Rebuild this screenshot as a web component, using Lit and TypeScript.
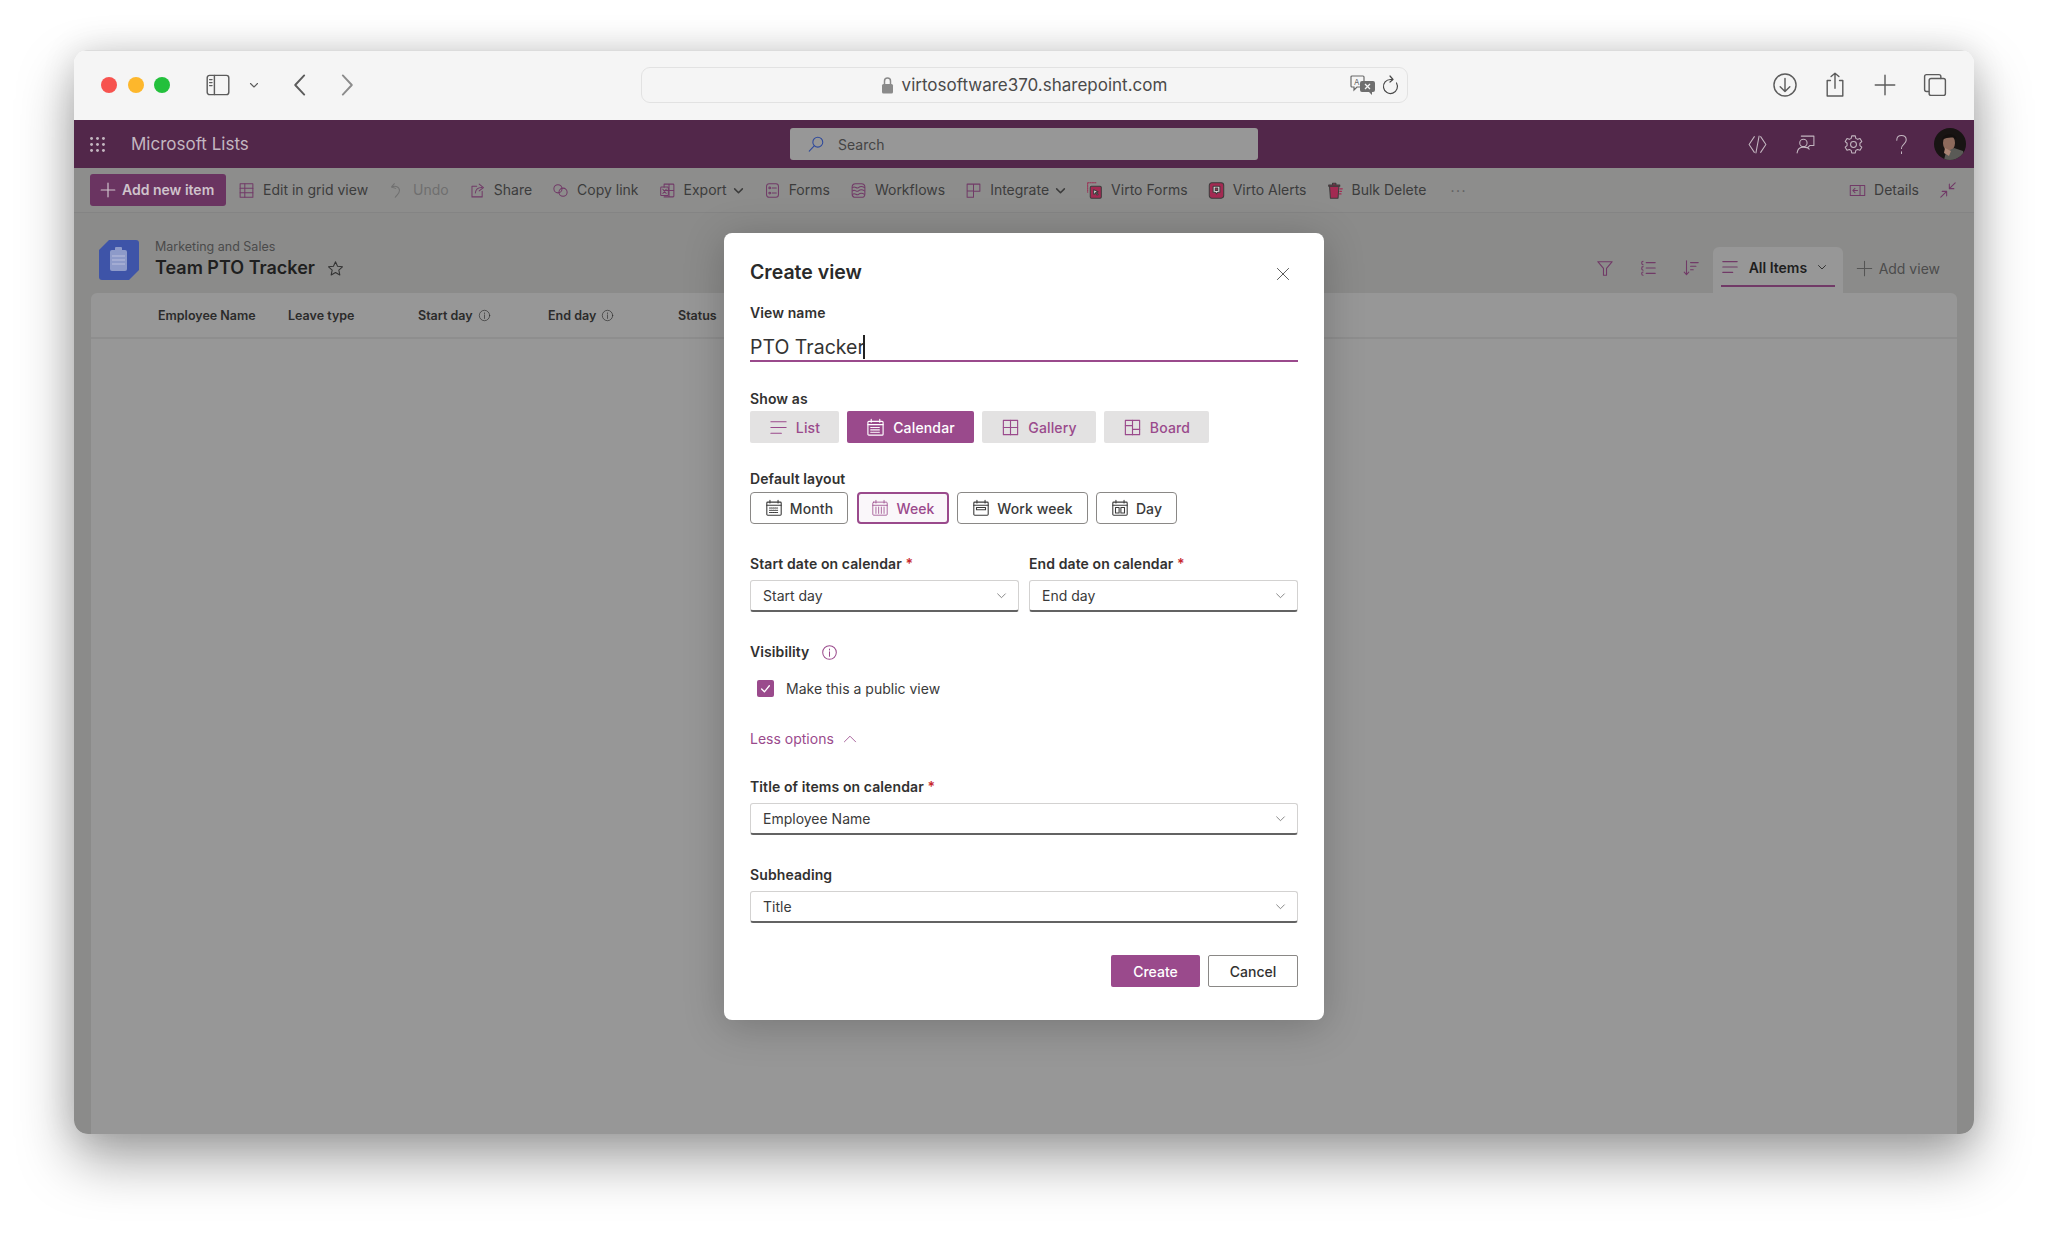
import { LitElement, html, svg, css } from "lit";
import { customElement } from "lit/decorators.js";

// icons, all on a 20x20 box unless noted
const icons: Record<string, any> = {
  grid: svg`<rect x="2.5" y="2" width="15" height="16"/><path d="M2.5 7.3h15M2.5 12.6h15M8 2v16"/>`,
  undo: svg`<path d="M7.5 2 4 6l5 1.5M4.5 6c4-2 9-.5 9 4 0 3.5-3 5-5 8"/>`,
  share: svg`<path d="M9 5H3.5v12.5h12V11"/><path d="M7.5 13c.3-4 3-6.5 7.5-6.5M12 2.5l5 4-5 4"/>`,
  link: svg`<circle cx="7" cy="8" r="4.8"/><circle cx="13" cy="12" r="4.8"/>`,
  excel: svg`<path d="M6 2.5h10.5a1 1 0 0 1 1 1v13a1 1 0 0 1-1 1H6M11.8 2.5v15M6 10h11.5M6 6.2V2.5"/><rect x="2" y="6" width="9" height="10" rx="1"/><path d="m4.5 8.5 4 5m0-5-4 5"/>`,
  forms: svg`<rect x="3" y="2" width="14" height="16" rx="3"/><circle cx="6.7" cy="7" r="1"/><circle cx="6.7" cy="13" r="1"/><path d="M9.5 7h5M9.5 13h5"/>`,
  flows: svg`<rect x="2.5" y="2" width="15" height="16" rx="4"/><path d="M3 6.5c3-2.5 4.5 2 7 0s4-2 7 0M3 10.5c3-2.5 4.5 2 7 0s4-2 7 0M3 14.5c3-2.5 4.5 2 7 0s4-2 7 0"/>`,
  integrate: svg`<path d="M2.5 2.5h15v8.5H10v7H2.5zM2.5 10.5H10V2.5"/>`,
  details: svg`<rect x="1.5" y="4" width="17" height="12"/><path d="M13 4v12M10 10H4.5M7 7.5 4.5 10 7 12.5"/>`,
  shrink: svg`<path d="M18 2l-6.5 6.5M11.5 3.5v5h5M2 18l6.5-6.5M8.5 16.5v-5h-5"/>`,
  filter: svg`<path d="M2 3h16l-6.3 7.5V18H8.3v-7.5z"/>`,
  lines: svg`<path d="M8 4h10M8 10h10M8 16h10M4.5 2.5C3 2.5 3 3.5 3 4.5s0 1.5 1.5 2M4.5 8.5C3 8.5 3 9.5 3 10.5s0 1.5 1.5 2M4.5 14.5c-1.5 0-1.5.5-1.5 1.500s0 2 1.5 2"/>`,
  sort: svg`<path d="M5 2v15M2.5 14.5 5 17.5l2.5-3M9.5 4H18M9.5 8h6M9.5 12h3"/>`,
  list: svg`<path d="M2 4h16M2 10h16M2 16h11"/>`,
  plus: svg`<path d="M10 1.5v17M1.5 10h17"/>`,
  gallery: svg`<rect x="2.5" y="2.5" width="15" height="15"/><path d="M10 2.5v15M2.5 10h15"/>`,
  board: svg`<rect x="2.5" y="2.5" width="15" height="15"/><path d="M10 2.5v15M10 12h7.5M2.5 8H10"/>`,
  calendar: svg`<rect x="2" y="3.5" width="16" height="14.5" rx="1"/><path d="M2 7h16M5.5 1.5v3M14.5 1.5v3"/><path stroke-dasharray="1 1" d="M5 10h10M5 12.5h10M5 15h10"/>`,
  week: svg`<rect x="2" y="3.5" width="16" height="14.5" rx="1"/><path d="M2 7h16M5.5 1.5v3M14.5 1.5v3M5.5 9v7M8.5 9v7M11.5 9v7M14.5 9v7"/>`,
  workweek: svg`<rect x="2" y="3.5" width="16" height="14.5" rx="1"/><path d="M2 7h16M5.5 1.5v3M14.5 1.5v3"/><rect x="5" y="9.5" width="10" height="2.5"/>`,
  day: svg`<rect x="2" y="3.5" width="16" height="14.5" rx="1"/><path d="M2 7h16M5.5 1.5v3M14.5 1.5v3"/><rect x="5" y="9.5" width="4" height="6"/><rect x="11" y="9.5" width="4" height="6"/>`,
  chevron: svg`<path d="m3 7 7 7 7-7"/>`,
  chevronUp: svg`<path d="m2 14 8-8 8 8"/>`,
  close: svg`<path d="m3 3 14 14M17 3 3 17"/>`,
  info: svg`<circle cx="10" cy="10" r="8"/><path d="M10 9v5.5M10 6v1"/>`,
  star: svg`<path d="m10 2 2.4 5.4 5.8.6-4.3 3.9 1.2 5.7L10 14.7l-5.1 2.9 1.2-5.7L1.8 8l5.8-.6z"/>`,
  search: svg`<circle cx="12" cy="8" r="5.5"/><path d="M8 12.2 2.5 18"/>`,
  dev: svg`<path d="M7 2.5 2 10l5 7.5M13 2.5 18 10l-5 7.5M11.5 2l-3 16"/>`,
  chat: svg`<circle cx="8" cy="8.5" r="3.5"/><path d="M2 18c.5-4 3-5.5 6-5.500s5 1 5.500 2M6 2h12v9h-4l-2 2"/>`,
  gear: svg`<circle cx="10" cy="10" r="2.8"/><path d="M8.3 1.8h3.4l.5 2.4 1.7.9 2.3-.8 1.7 2.9-1.800 1.600v2.200l1.800 1.600-1.700 2.900-2.300-.8-1.700.9-.5 2.400H8.300l-.5-2.400-1.700-.9-2.300.8-1.700-2.900 1.800-1.600V8.800L2.100 7.200l1.700-2.900 2.300.8 1.700-.9z"/>`,
  help: svg`<path d="M5.5 6c0-3 2-4.5 4.5-4.5s4.5 1.5 4.5 4.2c0 3.8-4.5 4-4.5 8M10 17v1.500"/>`,
  waffle: svg`<g fill="currentColor" stroke="none">${[3, 10, 17].flatMap((y) =>
    [3, 10, 17].map((x) => svg`<circle cx=${x} cy=${y} r="1.7"/>`)
  )}</g>`,
  sidebar: svg`<rect x="1" y="2" width="18" height="16" rx="2"/><path d="M7 2v16M3 5.5h2M3 8h2M3 10.5h2"/>`,
  back: svg`<path d="M13.5 2 6 10l7.5 8"/>`,
  forward: svg`<path d="m6.5 2 7.5 8-7.5 8"/>`,
  reload: svg`<path d="M15.5 8a7 7 0 1 1-6-3.5h2M9 1l3 3.5L9 7"/>`,
  download: svg`<circle cx="10" cy="10" r="8.5"/><path d="M10 5v10M6.3 11.3 10 15l3.7-3.700"/>`,
  upload: svg`<path d="M6.5 6.5H4v12h12v-12h-2.5M10 12.5V1M7 3.5 10 1l3 2.5"/>`,
  newtab: svg`<path d="M10 2.5v15M2.5 10h15"/>`,
  tabs: svg`<path d="M5 15H3.5A1.5 1.5 0 0 1 2 13.5v-10A1.5 1.5 0 0 1 3.5 2H13a1.5 1.5 0 0 1 1.5 1.5V5"/><rect x="5.5" y="5" width="12.5" height="13" rx="1.5"/>`,
};

function ic(name: string, cls = "") {
  return html`<svg class="ic ${cls}" viewBox="0 0 20 20">${icons[name]}</svg>`;
}

// the three Virto add-ins have filled artwork
const virtoForms = html`<svg class="ic solid" viewBox="0 0 20 20">
  <path d="M2 1h10M2 1v11" fill="none" stroke="#9c2c52" stroke-width="1.2" stroke-dasharray="1.5 1.2"/>
  <rect x="5" y="5" width="13" height="14" rx="1.5" fill="#a32a52"/>
  <path d="M9 9v5h1.5l.7-1.5 2 3 1.2-.8-2-2.800 1.800-.5z" fill="#d9d9d9"/>
</svg>`;
const virtoAlerts = html`<svg class="ic solid" viewBox="0 0 20 20">
  <rect x="1.5" y="1" width="17" height="18" rx="3" fill="#a32a52"/>
  <path d="M6 5h8v7h-2.5L10 14l-1.5-2H6z" fill="#dcdcdc"/>
  <rect x="8.5" y="7" width="3" height="3" fill="#a32a52"/>
</svg>`;
const bulkDelete = html`<svg class="ic solid" viewBox="0 0 20 20">
  <path d="M3 5h11l-1 14H4z" fill="#a32a52"/>
  <path d="M2 3.5h13V5H2zM6.5 1.5h4v2h-4z" fill="#a32a52"/>
  <path d="M15 8h3M15 11h2M14.5 14h2" stroke="#a32a52" stroke-width="1.4"/>
</svg>`;

const commands = [
  { label: "Edit in grid view", icon: ic("grid", "cmd-ic") },
  { label: "Undo", icon: ic("undo", "cmd-ic"), off: true },
  { label: "Share", icon: ic("share", "cmd-ic") },
  { label: "Copy link", icon: ic("link", "cmd-ic") },
  { label: "Export", icon: ic("excel", "cmd-ic"), menu: true },
  { label: "Forms", icon: ic("forms", "cmd-ic") },
  { label: "Workflows", icon: ic("flows", "cmd-ic") },
  { label: "Integrate", icon: ic("integrate", "cmd-ic"), menu: true },
  { label: "Virto Forms", icon: virtoForms },
  { label: "Virto Alerts", icon: virtoAlerts },
  { label: "Bulk Delete", icon: bulkDelete },
];

const columns = [
  { label: "Employee Name" },
  { label: "Leave type" },
  { label: "Start day", info: true },
  { label: "End day", info: true },
  { label: "Status" },
];

const showAs = [
  { label: "List", icon: "list", cls: "w-list" },
  { label: "Calendar", icon: "calendar", cls: "w-cal on" },
  { label: "Gallery", icon: "gallery", cls: "w-gal" },
  { label: "Board", icon: "board", cls: "w-board" },
];

const layouts = [
  { label: "Month", icon: "calendar", cls: "w-month" },
  { label: "Week", icon: "week", cls: "w-week on" },
  { label: "Work week", icon: "workweek", cls: "w-work" },
  { label: "Day", icon: "day", cls: "w-day" },
];

@customElement("app-root")
export class AppRoot extends LitElement {
  static styles = css`
    :host {
      display: block;
      width: 2048px;
      height: 1233px;
      background: #fff;
      font-family: Inter, "Noto Sans", "Liberation Sans", sans-serif;
      color: #323130;
    }
    .page {
      box-sizing: border-box;
      height: 1233px;
      padding: 50px 74px 0;
    }
    .window {
      position: relative;
      height: 1084px;
      display: flex;
      flex-direction: column;
      border-radius: 14px;
      overflow: hidden;
    }
    .shadow {
      border-radius: 14px;
      box-shadow: 0 26px 55px rgba(0, 0, 0, 0.36), 0 0 34px rgba(0, 0, 0, 0.12);
    }
    .ic {
      width: 18px;
      height: 18px;
      flex: none;
      fill: none;
      stroke: currentColor;
      stroke-width: 1.2;
      stroke-linecap: round;
      stroke-linejoin: round;
    }

    /* safari chrome */
    .chrome {
      height: 70px;
      flex: none;
      display: grid;
      grid-template-columns: 1fr 767px 1fr;
      align-items: center;
      background: #f5f5f5;
      box-shadow: inset 0 1px 0 #dcdcdc;
      color: #5c5c5c;
    }
    .chrome-left {
      display: flex;
      align-items: center;
      padding-left: 27px;
    }
    .light {
      width: 16px;
      height: 16px;
      border-radius: 50%;
      margin-right: 10.5px;
    }
    .red { background: #f7534f; }
    .amber { background: #fdb72c; }
    .green { background: #23c03c; }
    .sidebar {
      width: 26px;
      height: 24px;
      margin-left: 24px;
    }
    .small-chev {
      width: 10px;
      height: 10px;
      margin-left: 18px;
      stroke-width: 2.2;
    }
    .nav {
      width: 24px;
      height: 24px;
      stroke-width: 1.6;
    }
    .nav.back { margin-left: 29px; }
    .nav.fwd { margin-left: 23px; color: #8c8c8c; }
    .urlbar {
      position: relative;
      height: 36px;
      display: flex;
      align-items: center;
      justify-content: center;
      gap: 8px;
      box-sizing: border-box;
      border: 1px solid #e2e2e2;
      border-radius: 9px;
      font-size: 17px;
      color: #4a4a4a;
    }
    .lock {
      width: 13px;
      height: 18px;
    }
    .url-tools {
      position: absolute;
      right: 6px;
      top: 6px;
      display: flex;
      align-items: center;
      gap: 5px;
    }
    .translate { width: 26px; height: 22px; }
    .reload { width: 20px; height: 22px; }
    .chrome-right {
      display: flex;
      justify-content: flex-end;
      align-items: center;
      gap: 24px;
      padding-right: 26px;
    }
    .chrome-right .ic {
      width: 26px;
      height: 26px;
      stroke-width: 1.1;
    }

    /* suite bar */
    .suite {
      height: 48px;
      flex: none;
      display: grid;
      grid-template-columns: 1fr 468px 1fr;
      align-items: center;
      background: #52274a;
      color: #c3b6c0;
    }
    .suite-left {
      display: flex;
      align-items: center;
      font-size: 17px;
    }
    .waffle {
      width: 17px;
      height: 17px;
      margin: 0 25px 0 15px;
    }
    .search {
      height: 32px;
      display: flex;
      align-items: center;
      gap: 13px;
      padding-left: 17px;
      background: #979797;
      border-radius: 3px;
      font-size: 14px;
      color: #444;
    }
    .search .ic { color: #2f4a9c; }
    .suite-right {
      display: flex;
      justify-content: flex-end;
      align-items: center;
      gap: 27px;
      padding-right: 8px;
    }
    .suite-right .ic {
      width: 21px;
      height: 21px;
      stroke-width: 1;
    }
    .avatar {
      width: 32px;
      height: 32px;
      margin-left: -5px;
    }

    /* command bar */
    .cmdbar {
      height: 45px;
      flex: none;
      display: flex;
      align-items: center;
      gap: 20px;
      box-sizing: border-box;
      padding: 0 17px 0 16px;
      background: #8d8d8c;
      border-bottom: 1px solid #848484;
      font-size: 14px;
      color: #3c3c3c;
    }
    .cmdbar span { margin-bottom: 2px; }
    .add {
      width: 136px;
      height: 32px;
      box-sizing: border-box;
      display: flex;
      align-items: center;
      gap: 6px;
      padding-left: 10px;
      margin-right: -8px;
      background: #6a3461;
      border-radius: 3px;
      color: #cfc3cc;
      font-weight: 600;
      white-space: nowrap;
    }
    .add .ic {
      width: 16px;
      height: 16px;
      stroke-width: 1.5;
    }
    .cmd {
      display: flex;
      align-items: center;
      gap: 8px;
      white-space: nowrap;
    }
    .cmd.off { color: #6f6f6f; }
    .cmd .ic { width: 17px; height: 17px; }
    .cmd-ic { color: #713a67; }
    .cmd.off .cmd-ic { color: #707070; }
    .cmd .cmd-chev {
      width: 11px;
      height: 11px;
      margin-left: -2px;
      stroke-width: 2.8;
      color: #3c3c3c;
    }
    .more {
      color: #5c5c5c;
      letter-spacing: 1.5px;
      margin-left: 4px;
    }
    .cmd-right {
      margin-left: auto;
      display: flex;
      align-items: center;
      gap: 20px;
    }

    /* list body */
    .body {
      flex: 1;
      display: flex;
      flex-direction: column;
      background: #8b8b8a;
    }
    .head {
      height: 80px;
      flex: none;
      display: flex;
      align-items: flex-end;
      padding: 0 17px 0 25px;
    }
    .logo {
      width: 40px;
      height: 40px;
      margin-bottom: 13px;
    }
    .titles {
      margin: 0 0 13px 16px;
      display: flex;
      flex-direction: column;
    }
    .site {
      font-size: 12.5px;
      line-height: 14px;
      color: #4a4a4a;
    }
    .name-row {
      display: flex;
      align-items: center;
      gap: 12px;
      margin-top: 2px;
      font-size: 18px;
      line-height: 24px;
      font-weight: 600;
      color: #1f1f1f;
    }
    .star {
      width: 17px;
      height: 17px;
      color: #333;
    }
    .head-tools {
      margin-left: auto;
      height: 46px;
      display: flex;
      align-items: center;
      color: #713a67;
    }
    .tool {
      width: 18px;
      height: 18px;
      margin: 0 25px 4px 0;
    }
    .tool:nth-child(3) { margin-right: 13px; }
    .tab {
      width: 130px;
      height: 46px;
      box-sizing: border-box;
      display: flex;
      align-items: center;
      gap: 10px;
      padding: 0 8px 6px;
      background: #979797;
      border-radius: 6px 6px 0 0;
      font-size: 14px;
      font-weight: 600;
      color: #1e1e1e;
      position: relative;
    }
    .tab .ic { color: #713a67; }
    .tab .tab-chev {
      width: 10px;
      height: 10px;
      color: #333;
      stroke-width: 2;
    }
    .tab::after {
      content: "";
      position: absolute;
      left: 8px;
      right: 8px;
      bottom: 6px;
      height: 2.5px;
      background: #713a67;
    }
    .addview {
      display: flex;
      align-items: center;
      gap: 6px;
      margin: 0 0 4px 13px;
      padding-right: 17px;
      font-size: 14px;
      color: #4c4c4c;
    }
    .addview .ic {
      width: 17px;
      height: 17px;
      color: #555;
    }
    .table {
      flex: 1;
      margin: 0 17px;
      background: #979797;
      border-radius: 6px 6px 0 0;
    }
    .thead {
      height: 44px;
      display: flex;
      align-items: center;
      padding-left: 67px;
      border-bottom: 2px solid #8e8e8e;
      font-size: 12.5px;
      font-weight: 600;
      color: #2b2b2b;
    }
    .th {
      width: 130px;
      display: flex;
      align-items: center;
      gap: 5px;
    }
    .th .ic {
      width: 13px;
      height: 13px;
      stroke-width: 1;
    }

    /* dialog */
    .dialog {
      position: absolute;
      left: 650px;
      top: 183px;
      width: 600px;
      box-sizing: border-box;
      padding: 27px 26px 33px;
      background: #fff;
      border-radius: 8px;
      box-shadow: 0 6px 40px rgba(0, 0, 0, 0.22);
      font-size: 14px;
      color: #323130;
    }
    .dlg-head {
      display: flex;
      justify-content: space-between;
      align-items: center;
      height: 24px;
    }
    .dlg-title {
      font-size: 19.5px;
      font-weight: 600;
      color: #2a2a2a;
    }
    .close {
      width: 16px;
      height: 16px;
      margin: 4px 7px 0 0;
      color: #444;
      stroke-width: 1.1;
    }
    .lbl {
      display: block;
      line-height: 18px;
      font-size: 14px;
      font-weight: 600;
      letter-spacing: 0.1px;
    }
    .req { color: #c8282d; }
    .m20 { margin-top: 20px; }
    .m27 { margin-top: 27px; }
    .m28 { margin-top: 28px; }
    .m30 { margin-top: 30px; }
    .m31 { margin-top: 31px; }
    .m32 { margin-top: 32px; }
    .input {
      margin-top: 10px;
      height: 30px;
      padding-top: 2px;
      display: flex;
      align-items: center;
      box-sizing: border-box;
      border-bottom: 2px solid #9a4a8c;
      font-size: 19.5px;
      color: #333;
    }
    .caret {
      width: 2px;
      height: 24px;
      margin-left: -2px;
      background: #222;
    }
    .btns {
      display: flex;
      gap: 8px;
      margin-top: 3px;
    }
    .btns.outline {
      margin-top: 4px;
    }
    .opt {
      height: 32px;
      box-sizing: border-box;
      display: flex;
      align-items: center;
      justify-content: center;
      gap: 8px;
      background: #e3e2e2;
      border-radius: 2px;
      font-weight: 500;
      letter-spacing: 0.15px;
      color: #9a4a8c;
    }
    .opt .ic { width: 19px; height: 19px; }
    .opt.on {
      background: #9a4a8c;
      color: #fff;
    }
    .w-list { width: 89px; }
    .w-cal { width: 127px; }
    .w-gal { width: 114px; }
    .w-board { width: 105px; }
    .lay {
      height: 32px;
      box-sizing: border-box;
      display: flex;
      align-items: center;
      justify-content: center;
      gap: 7px;
      background: #fff;
      border: 1.5px solid #8a8886;
      border-radius: 4px;
      font-weight: 500;
      letter-spacing: 0.1px;
      color: #3a3a3a;
    }
    .lay .ic { width: 18px; height: 18px; }
    .lay.on {
      border: 2px solid #9a4a8c;
      background: #faf7fa;
      color: #9a4a8c;
    }
    .lay.on .ic { stroke-width: 0.9; }
    .w-month { width: 98px; margin-right: 1px; }
    .w-week { width: 92px; }
    .w-work { width: 131px; }
    .w-day { width: 81px; }
    .two {
      display: grid;
      grid-template-columns: 1fr 1fr;
      gap: 10px;
    }
    .select {
      margin-top: 7px;
      height: 32px;
      box-sizing: border-box;
      display: flex;
      align-items: center;
      justify-content: space-between;
      padding: 0 11px 0 12px;
      background: #fff;
      border: 1px solid #d3d2d1;
      border-bottom: 2px solid #636363;
      border-radius: 3px;
      font-size: 14px;
      color: #3a3a3a;
    }
    .select .ic {
      width: 11px;
      height: 11px;
      color: #666;
      stroke-width: 1.4;
    }
    .vis {
      display: flex;
      align-items: center;
      gap: 12px;
    }
    .vis .ic {
      width: 17px;
      height: 17px;
      color: #9a4a8c;
    }
    .check {
      margin: 17px 0 1px 7px;
      height: 20px;
      display: flex;
      align-items: center;
      gap: 12px;
      color: #3a3a3a;
    }
    .box {
      width: 17px;
      height: 17px;
      display: grid;
      place-items: center;
      background: #9a4a8c;
      border-radius: 2px;
      color: #fff;
    }
    .box .ic {
      width: 11px;
      height: 11px;
      stroke-width: 2.4;
    }
    .less {
      display: flex;
      align-items: center;
      gap: 9px;
      line-height: 18px;
      color: #9a4a8c;
    }
    .less .ic { width: 14px; height: 14px; stroke-width: 1.2; }
    .foot {
      display: flex;
      justify-content: flex-end;
      gap: 8px;
    }
    .foot div {
      height: 32px;
      width: 89px;
      box-sizing: border-box;
      display: grid;
      place-items: center;
      border-radius: 2px;
      font-weight: 500;
    }
    .create {
      background: #9a4a8c;
      color: #fff;
    }
    .foot .cancel {
      width: 90px;
      background: #fff;
      border: 1px solid #8a8886;
      color: #323130;
    }
  `;

  private select(value: string) {
    return html`<div class="select"><span>${value}</span>${ic("chevron")}</div>`;
  }

  render() {
    return html`
      <div class="page">
        <div class="shadow">
          <div class="window">
            ${this.chrome()} ${this.suite()} ${this.cmdbar()}
            <div class="body">
              ${this.head()}
              <div class="table">
                <div class="thead">
                  ${columns.map(
                    (c) => html`<div class="th">
                      <span>${c.label}</span>${c.info ? ic("info") : ""}
                    </div>`
                  )}
                </div>
              </div>
            </div>
            ${this.dialog()}
          </div>
        </div>
      </div>
    `;
  }

  private chrome() {
    return html`
      <div class="chrome">
        <div class="chrome-left">
          <span class="light red"></span><span class="light amber"></span><span class="light green"></span>
          ${ic("sidebar", "sidebar")} ${ic("chevron", "small-chev")} ${ic("back", "nav back")}
          ${ic("forward", "nav fwd")}
        </div>
        <div class="urlbar">
          <svg class="lock" viewBox="0 0 13 18">
            <path d="M3.5 8V5a3 3 0 0 1 6 0v3" fill="none" stroke="#8a8a8a" stroke-width="1.5" />
            <rect x="1" y="8" width="11" height="9.5" rx="1.5" fill="#8a8a8a" />
          </svg>
          <span>virtosoftware370.sharepoint.com</span>
          <div class="url-tools">
            <svg class="translate" viewBox="0 0 26 22">
              <path d="M2 2h11a1 1 0 0 1 1 1v9a1 1 0 0 1-1 1H7l-3 3v-3H2a1 1 0 0 1-1-1V3a1 1 0 0 1 1-1z" fill="none" stroke="#6a6a6a" stroke-width="1.2" />
              <text x="4" y="11" font-size="8" fill="#6a6a6a">A</text>
              <path d="M12 7h11a2 2 0 0 1 2 2v7a2 2 0 0 1-2 2h-1v3l-3-3h-7a2 2 0 0 1-2-2V9a2 2 0 0 1 2-2z" fill="#6e6e6e" />
              <path d="m15 10 5 5m0-5-5 5" stroke="#f5f5f5" stroke-width="1.3" />
            </svg>
            ${ic("reload", "reload")}
          </div>
        </div>
        <div class="chrome-right">
          ${ic("download")} ${ic("upload")} ${ic("newtab")} ${ic("tabs")}
        </div>
      </div>
    `;
  }

  private suite() {
    return html`
      <div class="suite">
        <div class="suite-left">${ic("waffle", "waffle")}<span>Microsoft Lists</span></div>
        <div class="search">${ic("search")}<span>Search</span></div>
        <div class="suite-right">
          ${ic("dev")} ${ic("chat")} ${ic("gear")} ${ic("help")}
          <svg class="avatar" viewBox="0 0 32 32">
            <defs><clipPath id="av"><circle cx="16" cy="16" r="16" /></clipPath></defs>
            <g clip-path="url(#av)">
              <rect width="32" height="32" fill="#181413" />
              <ellipse cx="15" cy="15" rx="6" ry="8" fill="#8d6a5c" />
              <path d="M8 12c1-7 12-8 15-1-4-2-9-2-15 1z" fill="#14100f" />
              <path d="M12 24l8-4 9 3 3 9H10z" fill="#5a5a56" />
              <path d="M11 20l6 3-2 5-5-3z" fill="#a98474" />
            </g>
          </svg>
        </div>
      </div>
    `;
  }

  private cmdbar() {
    return html`
      <div class="cmdbar">
        <div class="add">${ic("plus")}<span>Add new item</span></div>
        ${commands.map(
          (c) => html`<div class="cmd ${c.off ? "off" : ""}">
            ${c.icon}<span>${c.label}</span>${c.menu ? ic("chevron", "cmd-chev") : ""}
          </div>`
        )}
        <div class="more">···</div>
        <div class="cmd-right">
          <div class="cmd">${ic("details", "cmd-ic")}<span>Details</span></div>
          ${ic("shrink", "cmd-ic")}
        </div>
      </div>
    `;
  }

  private head() {
    return html`
      <div class="head">
        <svg class="logo" viewBox="0 0 40 40">
          <path d="M10 0h27a3 3 0 0 1 3 3v27L30 40H3a3 3 0 0 1-3-3V10z" fill="#3e54a8" />
          <rect x="11" y="10" width="17" height="21" rx="2" fill="#8d9ac9" />
          <rect x="16" y="7" width="7" height="5" rx="1" fill="#8d9ac9" />
          <path d="M13 16h13M13 20h13M13 24h13" stroke="#aab3d6" stroke-width="1.5" />
        </svg>
        <div class="titles">
          <span class="site">Marketing and Sales</span>
          <div class="name-row"><span>Team PTO Tracker</span>${ic("star", "star")}</div>
        </div>
        <div class="head-tools">
          ${ic("filter", "tool")} ${ic("lines", "tool")} ${ic("sort", "tool")}
          <div class="tab">${ic("list")}<span>All Items</span>${ic("chevron", "tab-chev")}</div>
          <div class="addview">${ic("plus")}<span>Add view</span></div>
        </div>
      </div>
    `;
  }

  private dialog() {
    return html`
      <div class="dialog">
        <div class="dlg-head">
          <span class="dlg-title">Create view</span>${ic("close", "close")}
        </div>
        <label class="lbl m20">View name</label>
        <div class="input"><span>PTO Tracker</span><span class="caret"></span></div>

        <label class="lbl m28">Show as</label>
        <div class="btns">
          ${showAs.map((o) => html`<div class="opt ${o.cls}">${ic(o.icon)}<span>${o.label}</span></div>`)}
        </div>

        <label class="lbl m27">Default layout</label>
        <div class="btns outline">
          ${layouts.map((o) => html`<div class="lay ${o.cls}">${ic(o.icon)}<span>${o.label}</span></div>`)}
        </div>

        <div class="two m31">
          <div>
            <label class="lbl">Start date on calendar <span class="req">*</span></label>
            ${this.select("Start day")}
          </div>
          <div>
            <label class="lbl">End date on calendar <span class="req">*</span></label>
            ${this.select("End day")}
          </div>
        </div>

        <div class="vis lbl m31"><span>Visibility</span>${ic("info")}</div>
        <div class="check">
          <span class="box"><svg class="ic" viewBox="0 0 20 20"><path d="m3 11 5 5 9-11" /></svg></span>
          <span>Make this a public view</span>
        </div>

        <div class="less m32"><span>Less options</span>${ic("chevronUp")}</div>

        <label class="lbl m30">Title of items on calendar <span class="req">*</span></label>
        ${this.select("Employee Name")}

        <label class="lbl m31">Subheading</label>
        ${this.select("Title")}

        <div class="foot m32">
          <div class="create">Create</div>
          <div class="cancel">Cancel</div>
        </div>
      </div>
    `;
  }
}
